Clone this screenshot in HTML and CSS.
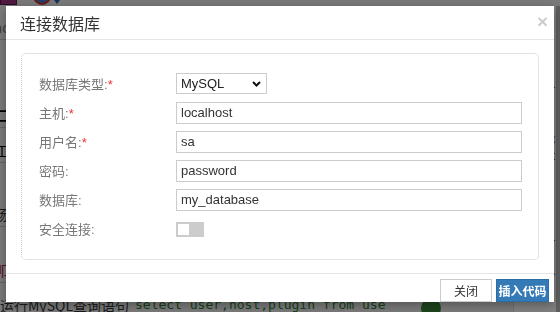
FILE: index.html
```html
<!DOCTYPE html>
<html lang="zh-CN">
<head>
  <meta charset="UTF-8">
  <meta name="viewport" content="width=device-width, initial-scale=1.0">
  <title>连接数据库</title>
  <link rel="stylesheet" href="styles.css">
</head>
<body>
<div class="page">
  <div class="toolbar">
    <span class="tb-box"></span>
    <span class="tb-circle"></span>
    <span class="tb-caret"></span>
  </div>
  <div class="editor">
    <div class="left-col">
      <div class="line l1">Read</div>
      <div class="line l2">口</div>
      <div class="line l3">工</div>
      <div class="line l4">肠</div>
      <div class="line l5 red">叩</div>
      <div class="line l6">运行MySQL查询语句 <code>select user,host,plugin from use</code><span class="dot"></span></div>
    </div>
    <div class="right-col">
      <div class="code">}</div>
      <div class="code"></div>
      <div class="code"></div>
      <div class="code blue">c</div>
      <div class="code blue">t</div>
      <div class="code"></div>
      <div class="code"></div>
      <div class="code"></div>
      <div class="code"></div>
      <div class="code">}</div>
      <div class="code"></div>
      <div class="code">}</div>
    </div>
    <div class="scrollbar"></div>
  </div>
</div>

<div class="overlay"></div>

<div class="modal">
  <div class="modal-header">
    <h4 class="modal-title">连接数据库</h4>
    <span class="close">&times;</span>
  </div>
  <div class="modal-body">
    <div class="form-box">
      <div class="form-row">
        <label>数据库类型:<em>*</em></label>
        <div class="select-wrap">
          <select class="db-type">
            <option>MySQL</option>
            <option>SQL Server</option>
            <option>Oracle</option>
          </select>
          <svg class="chevron" width="9" height="6" viewBox="0 0 9 6"><path d="M1 1 L4.5 4.5 L8 1" fill="none" stroke="#111" stroke-width="2"/></svg>
        </div>
      </div>
      <div class="form-row">
        <label>主机:<em>*</em></label>
        <input type="text" value="localhost">
      </div>
      <div class="form-row">
        <label>用户名:<em>*</em></label>
        <input type="text" value="sa">
      </div>
      <div class="form-row">
        <label>密码:</label>
        <input type="text" value="password">
      </div>
      <div class="form-row">
        <label>数据库:</label>
        <input type="text" value="my_database">
      </div>
      <div class="form-row">
        <label>安全连接:</label>
        <span class="switch"><span class="knob"></span></span>
      </div>
    </div>
  </div>
  <div class="modal-footer">
    <button class="btn btn-default">关闭</button>
    <button class="btn btn-primary">插入代码</button>
  </div>
</div>
</body>
</html>
```
FILE: styles.css
```css
html, body {
  margin: 0;
  padding: 0;
  height: 100%;
  overflow: hidden;
}
body {
  font-family: "Liberation Sans", "Noto Sans CJK SC", sans-serif;
  font-size: 13px;
  color: #333;
  background-color: #f4f4f4;
}

/* page behind the dialog */
.page {
  height: 100%;
}
.toolbar {
  height: 6px;
  display: flex;
  align-items: flex-end;
  overflow: hidden;
  background-color: #f2f2f2;
}
.tb-box {
  width: 15px;
  height: 14px;
  margin-bottom: 1px;
  border: 1px solid #5a1a4a;
  background-color: #a0307e;
}
.tb-circle {
  width: 14px;
  height: 14px;
  margin-left: 16px;
  margin-bottom: 1px;
  border: 2px solid #d9332a;
  border-radius: 50%;
  background-color: #4a78c8;
}
.tb-caret {
  width: 0;
  height: 0;
  margin-left: 3px;
  margin-bottom: 2px;
  border-left: 3px solid transparent;
  border-right: 3px solid transparent;
  border-top: 4px solid #3264b4;
}
.editor {
  display: flex;
  height: calc(100% - 6px);
}
.left-col {
  width: 520px;
  background-color: #f2f2f2;
}
.line {
  border-bottom: 1px solid #c8c8c8;
  font-family: "Noto Sans CJK SC", sans-serif;
  font-size: 14px;
  line-height: 16px;
  display: flex;
  align-items: flex-end;
  padding-bottom: 4px;
  box-sizing: border-box;
  white-space: nowrap;
}
.l1 { height: 34px; margin-left: -22px; color: #777; }
.l2 { height: 88px; margin-left: -4px; color: #000; font-weight: bold; }
.l3 { height: 35px; margin-left: -5px; color: #000; }
.l4 { height: 64px; margin-left: -6px; }
.l5 { height: 56px; margin-left: -5px; }
.l6 { height: 40px; border-bottom: none; align-items: flex-start; padding-top: 14px; }
.red { color: #b01030; }
.line code {
  font-family: "DejaVu Sans Mono", monospace;
  font-size: 13px;
  color: #2e7d32;
  margin-left: 6px;
}
.dot {
  display: inline-block;
  width: 20px;
  height: 20px;
  margin-left: 36px;
  margin-top: 1px;
  border-radius: 50%;
  background-color: #3a8a3a;
}
.right-col {
  flex: 1;
  padding-top: 74px;
  padding-left: 34px;
  background-color: #fff;
  border-left: 1px solid #ddd;
}
.code {
  height: 17px;
  font-family: "DejaVu Sans Mono", monospace;
  font-size: 13px;
  color: #222;
}
.blue { color: #1a3aa8; }
.scrollbar {
  width: 4px;
  background-color: #bbb;
}

.overlay {
  position: fixed;
  top: 0;
  left: 0;
  right: 0;
  bottom: 0;
  background-color: rgba(0, 0, 0, 0.5);
}

/* dialog */
.modal {
  position: fixed;
  top: 6px;
  left: 6px;
  width: 548px;
  height: 296px;
  background-color: #fff;
  box-shadow: 0 3px 9px rgba(0, 0, 0, 0.3);
  display: flex;
  flex-direction: column;
}
.modal-header {
  height: 33px;
  padding: 0 6px 0 14px;
  border-bottom: 1px solid #e5e5e5;
  display: flex;
  align-items: center;
  justify-content: space-between;
}
.modal-title {
  margin: 0;
  font-family: "Noto Sans CJK SC", sans-serif;
  font-size: 16px;
  font-weight: normal;
  color: #333;
}
.close {
  font-size: 19px;
  font-weight: bold;
  color: #000;
  opacity: 0.2;
  line-height: 1;
  cursor: pointer;
  margin-top: -3px;
}
.modal-body {
  padding: 13px 15px;
}
.form-box {
  border: 1px dotted #c8c8c8;
  border-top-style: solid;
  border-top-color: #e2e2e2;
  border-radius: 5px;
  padding: 15px 16px 16px 17px;
}
.form-row {
  height: 29px;
  display: flex;
  align-items: center;
}
.form-row label {
  width: 137px;
  flex-shrink: 0;
  font-family: "Liberation Sans", "Noto Sans CJK SC", sans-serif;
  font-size: 13px;
  color: #777;
}
.form-row label em {
  font-style: normal;
  color: #e33;
}
.form-row input {
  flex: 1;
  height: 22px;
  box-sizing: border-box;
  margin: 0;
  padding: 0 4px;
  border: 1px solid #ccc;
  font-family: "Liberation Sans", sans-serif;
  font-size: 13px;
  color: #333;
  outline: none;
}
.select-wrap {
  position: relative;
  width: 91px;
  height: 21px;
}
.db-type {
  appearance: none;
  -webkit-appearance: none;
  width: 100%;
  height: 100%;
  margin: 0;
  padding: 0 4px;
  border: 1px solid #ccc;
  border-radius: 0;
  background-color: #fff;
  font-family: "Liberation Sans", sans-serif;
  font-size: 13px;
  color: #222;
  outline: none;
}
.chevron {
  position: absolute;
  right: 6px;
  top: 8px;
  pointer-events: none;
}
.switch {
  display: flex;
  width: 28px;
  height: 15px;
  padding: 2px;
  box-sizing: border-box;
  background-color: #ccc;
  margin-top: 1px;
}
.knob {
  width: 11px;
  height: 11px;
  background-color: #fff;
}
.modal-footer {
  margin-top: auto;
  border-top: 1px solid #e5e5e5;
  padding: 5px 5px 0 0;
  display: flex;
  justify-content: flex-end;
  gap: 4px;
}
.btn {
  height: 23px;
  padding: 0;
  font-family: "Noto Sans CJK SC", sans-serif;
  font-size: 12px;
  cursor: pointer;
  border-radius: 0;
}
.btn-default {
  width: 52px;
  background-color: #fff;
  border: 1px solid #ccc;
  color: #333;
}
.btn-primary {
  width: 53px;
  background-color: #337ab7;
  border: 1px solid #2e6da4;
  color: #fff;
  font-weight: bold;
}
```
